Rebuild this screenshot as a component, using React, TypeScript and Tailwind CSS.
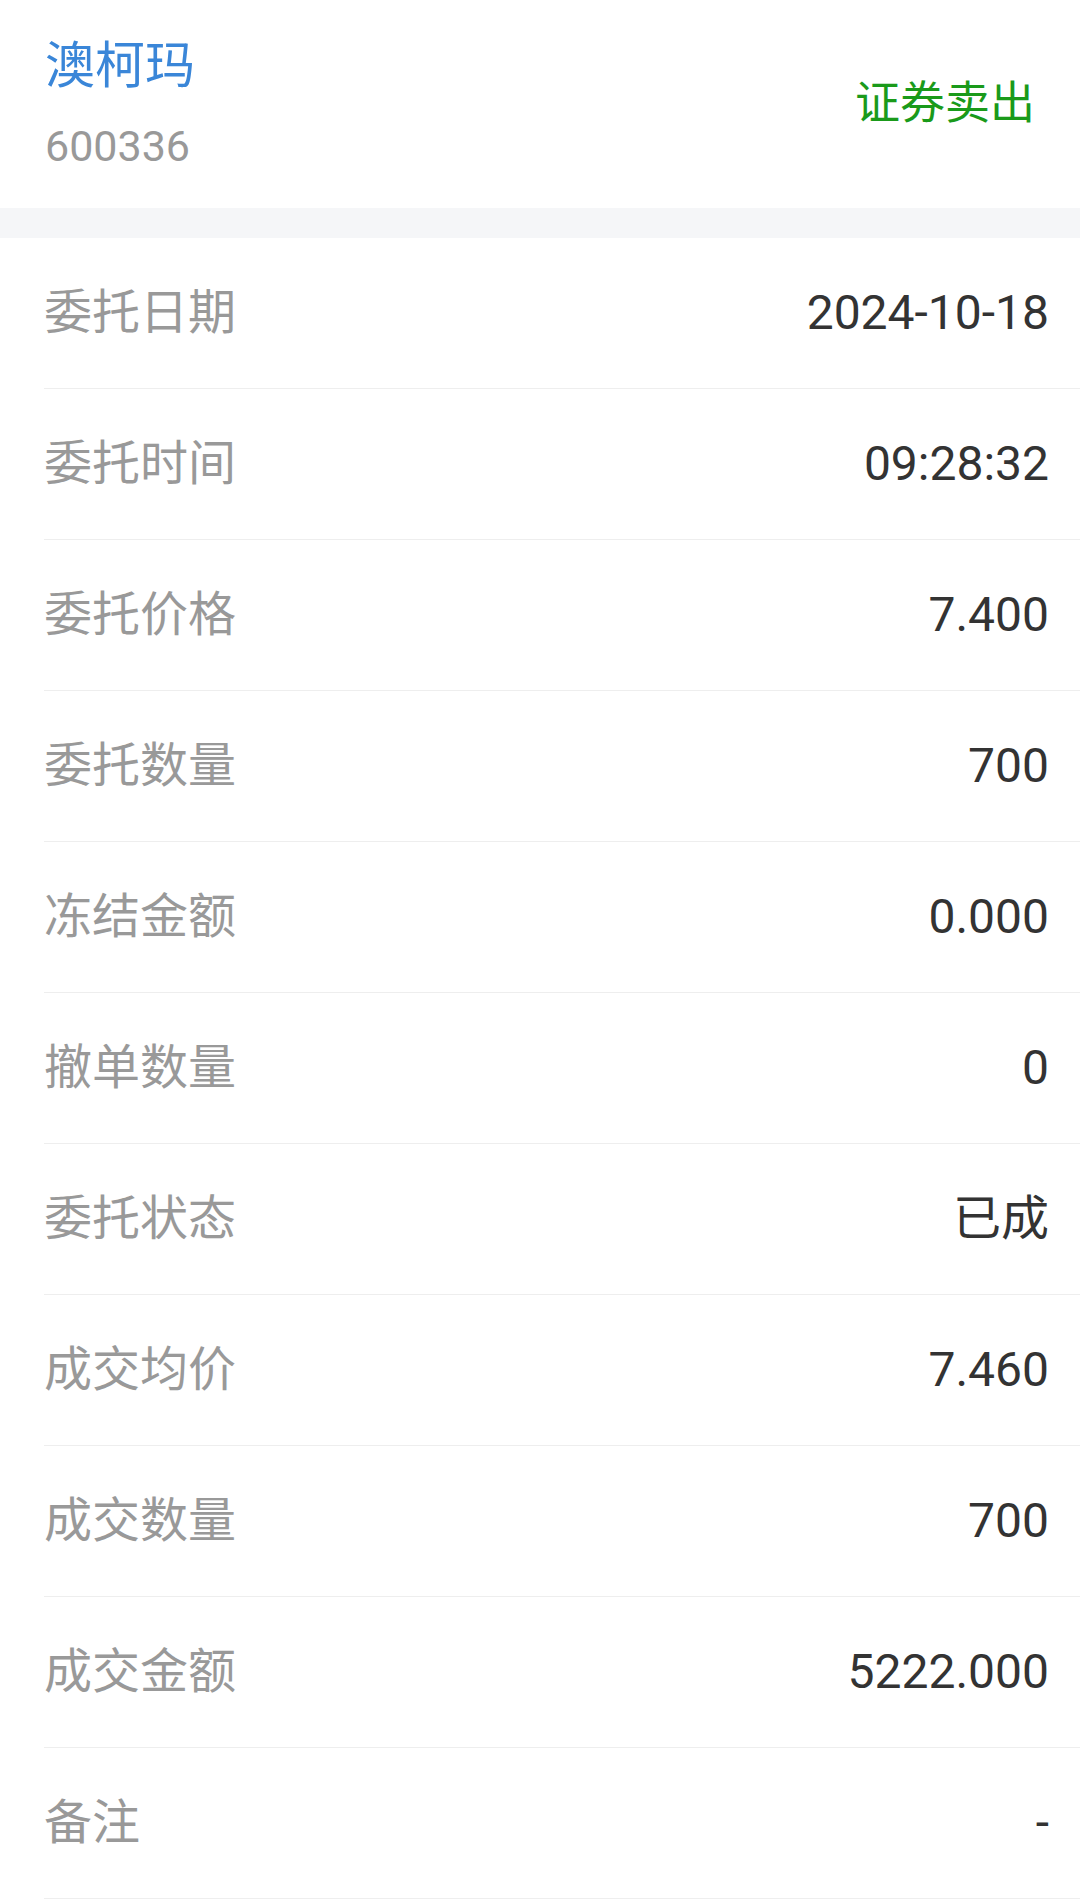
const rows: [string, string][] = [
  ['委托日期', '2024-10-18'],
  ['委托时间', '09:28:32'],
  ['委托价格', '7.400'],
  ['委托数量', '700'],
  ['冻结金额', '0.000'],
  ['撤单数量', '0'],
  ['委托状态', '已成'],
  ['成交均价', '7.460'],
  ['成交数量', '700'],
  ['成交金额', '5222.000'],
  ['备注', '-'],
];

const font = { fontFamily: "Roboto, 'Noto Sans CJK SC', sans-serif" };

export default function App() {
  return (
    <div className="w-[1080px] min-h-[1899px] bg-white" style={font}>
      <div className="h-[208px] flex items-center justify-between pl-[45px] pr-[45px]">
        <div className="flex flex-col gap-[28px]">
          <div className="text-[50px] leading-[56px] text-[#3a86d8]">澳柯玛</div>
          <div className="text-[43px] leading-[48px] text-[#999999]">600336</div>
        </div>
        <div className="text-[45px] leading-[56px] text-[#1a9a1a]">证券卖出</div>
      </div>
      <div className="h-[30px] bg-[#f5f6f8]" />
      <div>
        {rows.map(([label, value]) => (
          <div key={label} className="pl-[44px]">
            <div className="h-[151px] flex items-center justify-between pr-[31px] border-b border-[#eeeeee]">
              <span className="text-[48px] text-[#999999]">{label}</span>
              <span className="text-[48px] text-[#333333]">{value}</span>
            </div>
          </div>
        ))}
      </div>
    </div>
  );
}
